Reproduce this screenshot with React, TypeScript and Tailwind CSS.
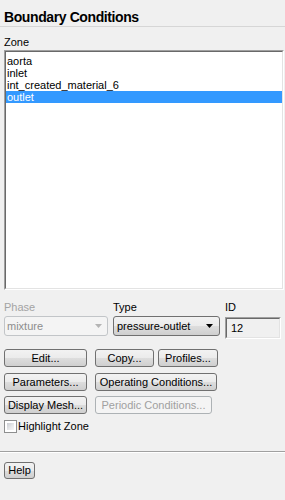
import React from "react";

const btnEnabled =
  "border-[#707070] bg-[linear-gradient(#f2f2f2_0%,#ebebeb_50%,#dddddd_51%,#cfcfcf_100%)] text-black";
const btnDisabled = "border-[#adb2b5] bg-[#f4f4f4] text-[#a0a0a0]";

function Btn({
  className = "",
  disabled = false,
  children,
}: {
  className?: string;
  disabled?: boolean;
  children: React.ReactNode;
}) {
  return (
    <button
      type="button"
      className={`${className} flex items-center justify-center rounded-[3px] border leading-[13px] whitespace-nowrap ${
        disabled ? btnDisabled : btnEnabled
      }`}
    >
      {children}
    </button>
  );
}

function Arrow({ color }: { color: string }) {
  return (
    <svg width="7" height="4" viewBox="0 0 7 4" className="shrink-0">
      <path d="M0 0 H7 L3.5 4 Z" fill={color} />
    </svg>
  );
}

const zones = ["aorta", "inlet", "int_created_material_6", "outlet"];

export default function App() {
  return (
    <div className="w-[285px] h-[500px] overflow-hidden bg-[#f0f0f0] text-[11px] leading-[13px] text-black font-['Liberation_Sans',Arial,sans-serif]">
      <div className="h-[26px] pl-1 pt-[9px] text-[14px] leading-[16px] font-bold tracking-[-0.4px]">
        Boundary Conditions
      </div>
      <div className="h-px bg-[#d6d6d6]" />

      <div className="mt-[9px] h-[13px] pl-1">Zone</div>
      <div className="ml-1 mt-px w-[280px] h-[240px] border border-t-[#a0a0a0] border-l-[#a0a0a0] border-r-white border-b-white">
        <div className="h-full bg-white border border-t-[#696969] border-l-[#696969] border-r-[#e3e3e3] border-b-[#e3e3e3] pt-[3px]">
          {zones.map((z) => (
            <div
              key={z}
              className={`h-[12px] leading-[12px] pl-px ${
                z === "outlet" ? "bg-[#3399ff] text-white" : ""
              }`}
            >
              {z}
            </div>
          ))}
        </div>
      </div>

      <div className="mt-[11px] flex pl-1">
        <div className="w-[104px] flex flex-col">
          <div className="h-[13px] text-[#a3a3a3]">Phase</div>
          <div className="mt-[2px] h-[20px] flex items-center justify-between rounded-[3px] border border-[#c2c5c8] bg-[#f4f4f4] pl-[2px] pr-[5px] text-[#8d8d8d]">
            <span>mixture</span>
            <Arrow color="#b4b4b4" />
          </div>
        </div>
        <div className="ml-[5px] w-[107px] flex flex-col">
          <div className="h-[13px]">Type</div>
          <div
            className={`mt-[2px] h-[20px] flex items-center justify-between rounded-[3px] border pl-[3px] pr-[6px] ${btnEnabled}`}
          >
            <span>pressure-outlet</span>
            <Arrow color="#000000" />
          </div>
        </div>
        <div className="ml-[5px] w-[56px] flex flex-col">
          <div className="h-[13px]">ID</div>
          <div className="mt-[3px] h-[22px] border border-t-[#a0a0a0] border-l-[#a0a0a0] border-r-white border-b-white">
            <div className="h-full flex items-center pl-[4px] bg-[#f0f0f0] border border-t-[#696969] border-l-[#696969] border-r-[#e3e3e3] border-b-[#e3e3e3]">
              12
            </div>
          </div>
        </div>
      </div>

      <div className="mt-[10px] pl-1 flex flex-col">
        <div className="flex">
          <Btn className="w-[83px] h-[18px]">Edit...</Btn>
          <Btn className="ml-[8px] w-[59px] h-[18px]">Copy...</Btn>
          <Btn className="ml-[4px] w-[60px] h-[18px]">Profiles...</Btn>
        </div>
        <div className="mt-[6px] flex">
          <Btn className="w-[83px] h-[18px]">Parameters...</Btn>
          <Btn className="ml-[8px] w-[122px] h-[18px]">Operating Conditions...</Btn>
        </div>
        <div className="mt-[5px] flex">
          <Btn className="w-[83px] h-[18px]">Display Mesh...</Btn>
          <Btn disabled className="ml-[8px] w-[117px] h-[18px]">
            Periodic Conditions...
          </Btn>
        </div>
        <div className="mt-[6px] flex items-center h-[13px]">
          <div className="w-[13px] h-[13px] border border-[#8e8f8f] bg-white p-[2px]">
            <div className="w-full h-full bg-[linear-gradient(135deg,#c9ccd1_0%,#e9eaec_60%,#f6f6f6_100%)]" />
          </div>
          <span className="ml-[1px]">Highlight Zone</span>
        </div>
      </div>

      <div className="mt-[18px] h-px bg-[#a0a0a0]" />
      <div className="h-px bg-white" />

      <div className="mt-[9px] pl-1">
        <Btn className="w-[31px] h-[17px]">Help</Btn>
      </div>
    </div>
  );
}
